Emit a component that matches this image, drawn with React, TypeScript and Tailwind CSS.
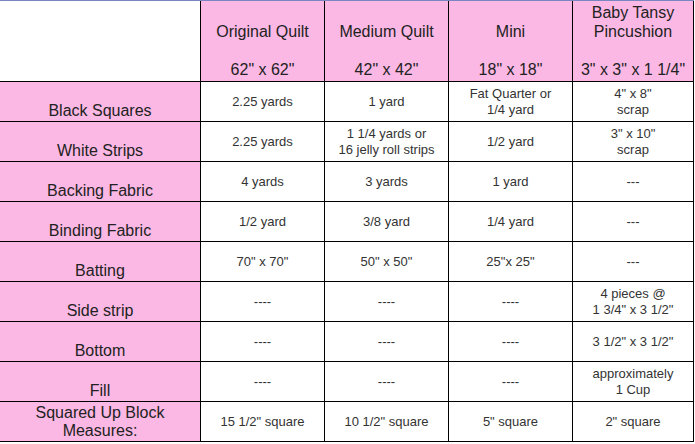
import React from "react";

const headers: string[][] = [
  ["Original Quilt", "", "62\" x 62\""],
  ["Medium Quilt", "", "42\" x 42\""],
  ["Mini", "", "18\" x 18\""],
  ["Baby Tansy", "Pincushion", "", "3\" x 3\" x 1 1/4\""],
];

const rows: { label: string[]; cells: string[][] }[] = [
  { label: ["", "Black Squares"], cells: [["2.25 yards"], ["1 yard"], ["Fat Quarter or", "1/4 yard"], ["4\" x 8\"", "scrap"]] },
  { label: ["", "White Strips"], cells: [["2.25 yards"], ["1 1/4 yards or", "16 jelly roll strips"], ["1/2 yard"], ["3\" x 10\"", "scrap"]] },
  { label: ["", "Backing Fabric"], cells: [["4 yards"], ["3 yards"], ["1 yard"], ["---"]] },
  { label: ["", "Binding Fabric"], cells: [["1/2 yard"], ["3/8 yard"], ["1/4 yard"], ["---"]] },
  { label: ["", "Batting"], cells: [["70\" x 70\""], ["50\" x 50\""], ["25\"x 25\""], ["---"]] },
  { label: ["", "Side strip"], cells: [["----"], ["----"], ["----"], ["4 pieces @", "1 3/4\" x 3 1/2\""]] },
  { label: ["", "Bottom"], cells: [["----"], ["----"], ["----"], ["3 1/2\" x 3 1/2\""]] },
  { label: ["", "Fill"], cells: [["----"], ["----"], ["----"], ["approximately", "1 Cup"]] },
  { label: ["Squared Up Block", "Measures:"], cells: [["15 1/2\" square"], ["10 1/2\" square"], ["5\" square"], ["2\" square"]] },
];

export default function App() {
  return (
    <div
      className="w-[695px] h-[444px] bg-white overflow-hidden"
      style={{ fontFamily: '"Liberation Sans", Arial, sans-serif' }}
    >
      <div className="w-[694px] border-t border-[#7a86c0] grid grid-cols-[201px_124px_124px_124px_121px] auto-rows-[40px] grid-rows-[81px]">
        <div className="bg-white border-r border-b border-black" />
        {headers.map((h, i) => (
          <div
            key={i}
            className="bg-[#fcb8e4] border-r border-b border-black flex flex-col justify-end items-center pb-[2px] text-[16px] leading-[19px] text-[#222]"
          >
            {h.map((l, j) => (
              <div key={j} className="h-[19px] whitespace-nowrap">
                {l}
              </div>
            ))}
          </div>
        ))}
        {rows.map((r, i) => (
          <React.Fragment key={i}>
            <div className="bg-[#fcb8e4] border-r border-b border-black flex flex-col justify-center items-center text-[16px] leading-[18px] text-[#222]">
              {r.label.map((l, j) => (
                <div key={j} className="h-[18px] whitespace-nowrap">
                  {l}
                </div>
              ))}
            </div>
            {r.cells.map((c, j) => (
              <div
                key={j}
                className="bg-white border-r border-b border-black flex flex-col justify-center items-center text-[13px] leading-[16px] text-[#333]"
              >
                {c.map((l, k) => (
                  <div key={k} className="whitespace-nowrap">
                    {l}
                  </div>
                ))}
              </div>
            ))}
          </React.Fragment>
        ))}
      </div>
    </div>
  );
}
